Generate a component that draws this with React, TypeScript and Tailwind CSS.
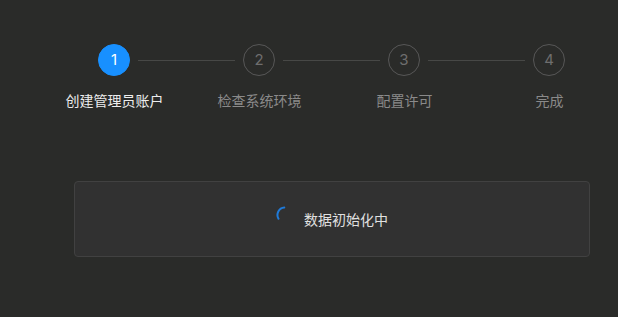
import React from "react";

const steps = ["创建管理员账户", "检查系统环境", "配置许可", "完成"];

const fontStack = "font-['Noto_Sans_CJK_SC','Noto_Sans',sans-serif]";

const StepCircle = ({ index, active }: { index: number; active: boolean }) => (
  <div
    className={`${
      active
        ? "bg-[#1890ff] text-white border-[#1890ff]"
        : "bg-transparent text-[#6e6e6e] border-[#575757]"
    } w-8 h-8 rounded-full border flex items-center justify-center text-[15px] shrink-0 font-['Inter',sans-serif]`}
  >
    {index + 1}
  </div>
);

// loading arc, only the left part of the ring is drawn
const Spinner = () => (
  <svg width="18" height="18" viewBox="0 0 18 18" className="shrink-0 mb-2">
    <path
      d="M8.3 1.5 A7.5 7.5 0 0 0 2.5 12.75"
      fill="none"
      stroke="#1f7ad8"
      strokeWidth="2"
      strokeLinecap="round"
    />
  </svg>
);

const App = () => {
  return (
    <div className={`w-[618px] h-[317px] bg-[#2a2b29] ${fontStack} overflow-hidden`}>
      <div className="flex items-center pt-[44px] pl-[98px]">
        {steps.map((_, index) => (
          <React.Fragment key={index}>
            <StepCircle index={index} active={index === 0} />
            {index < steps.length - 1 && (
              <div className="w-[97px] h-px bg-[#474846] mx-2 shrink-0" />
            )}
          </React.Fragment>
        ))}
      </div>
      <div className="flex pl-[42px] mt-[13px]">
        {steps.map((label, index) => (
          <div
            key={label}
            className={`${
              index === 0 ? "text-[#ededed]" : "text-[#8a8a8a]"
            } w-[145px] shrink-0 text-center text-[14px] leading-[22px]`}
          >
            {label}
          </div>
        ))}
      </div>
      <div className="ml-[74px] mt-[70px] w-[516px] h-[76px] rounded-[4px] border border-[#414141] bg-[#313131] flex items-center justify-center gap-2.5">
        <Spinner />
        <span className="text-[14px] text-[#e0e0e0] leading-[22px]">数据初始化中</span>
      </div>
    </div>
  );
};

export default App;
